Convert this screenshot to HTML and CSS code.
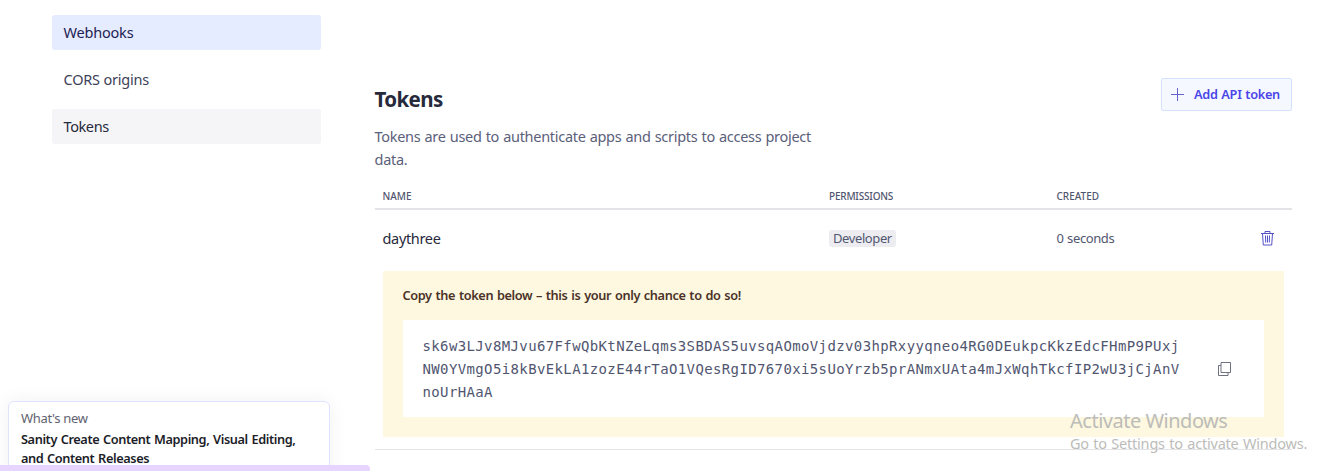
FILE: index.html
```html
<!DOCTYPE html>
<html lang="en">
<head>
<meta charset="utf-8">
<title>Tokens</title>
<link rel="stylesheet" href="styles.css">
</head>
<body>
<div class="page">
  <nav class="sidebar">
    <a class="nav-item nav-focus">Webhooks</a>
    <a class="nav-item">CORS origins</a>
    <a class="nav-item nav-current">Tokens</a>
  </nav>
  <main class="main">
    <header class="head">
      <div class="intro">
        <h1 class="title">Tokens</h1>
        <p class="desc">Tokens are used to authenticate apps and scripts to access project<br>data.</p>
      </div>
      <button class="add">
        <svg class="plus" width="15" height="15" viewBox="0 0 15 15"><path d="M7.500 1v13M1 7.500h13"/></svg>
        <span class="add-label">Add API token</span>
      </button>
    </header>
    <div class="row thead"><span>NAME</span><span class="th-perm">PERMISSIONS</span><span>CREATED</span></div>
    <div class="row trow">
      <span class="name">daythree</span>
      <span class="perm"><span class="badge">Developer</span></span>
      <span class="created">0 seconds</span>
      <svg class="trash" width="15" height="17" viewBox="0 0 15 17"><path d="M1 3.500h13M5 3.500V1.500h5v2M2.500 3.500l.8 11.500h8.400l.8-11.500M5.500 5.500l.2 7M7.500 5.500v7M9.500 5.500l-.2 7"/></svg>
    </div>
    <section class="notice">
      <p class="notice-title">Copy the token below – this is your only chance to do so!</p>
      <div class="secret">
        <code class="code">sk6w3LJv8MJvu67FfwQbKtNZeLqms3SBDAS5uvsqAOmoVjdzv03hpRxyyqneo4RG0DEukpcKkzEdcFHmP9PUxj<br>NW0YVmgO5i8kBvEkLA1zozE44rTaO1VQesRgID7670xi5sUoYrzb5prANmxUAta4mJxWqhTkcfIP2wU3jCjAnV<br>noUrHAaA</code>
        <svg class="copy" width="15" height="16" viewBox="0 0 15 16"><path d="M4 1.500h9.500v10H4zM4 4.500H1.500v10H11v-3"/></svg>
      </div>
    </section>
  </main>
</div>
<aside class="news">
  <p class="news-label">What's new</p>
  <p class="news-title">Sanity Create Content Mapping, Visual Editing,<br>and Content Releases</p>
</aside>
<div class="status"></div>
<div class="watermark">
  <p class="wm-title">Activate Windows</p>
  <p class="wm-text">Go to Settings to activate Windows.</p>
</div>
</body>
</html>
```
FILE: styles.css
```css
* { box-sizing: border-box; }
body { margin: 0; width: 1343px; height: 471px; overflow: hidden; position: relative; background: #fff; font-family: "Noto Sans", sans-serif; color: #272a3b; }
p, h1 { margin: 0; }
svg { fill: none; stroke: currentColor; flex: none; }
.page { display: flex; gap: 54px; padding-left: 52px; }
.sidebar { width: 269px; padding-top: 15px; display: flex; flex-direction: column; gap: 12px; }
.nav-item { height: 35px; padding-left: 11.5px; border-radius: 3px; font-size: 14.5px; line-height: 35px; letter-spacing: -.2px; color: #3e4259; }
.nav-focus { background: #e5ecff; color: #1e2253; }
.nav-current { background: #f5f5f7; color: #272a3b; letter-spacing: -.4px; }
.main { width: 917px; border-bottom: 1px solid #e3e4e8; height: 450px; }
.head { display: flex; justify-content: space-between; align-items: flex-start; padding-top: 78px; height: 184px; }
.intro { margin-left: -.5px; }
.title { font-size: 20.5px; line-height: 28px; font-weight: 700; letter-spacing: -.6px; margin-top: 7px; }
.desc { font-size: 14.5px; line-height: 23px; letter-spacing: -.29px; word-spacing: .6px; margin-top: 12px; color: #5b607a; white-space: nowrap; }
.add { width: 131px; height: 33px; padding: 0 0 1px 8px; display: flex; align-items: center; gap: 9px; border: 1px solid #d5e2ff; border-radius: 2px; background: #f5f8ff; color: #4a45e8; font: 600 12.75px/20px "Noto Sans", sans-serif; letter-spacing: -.32px; word-spacing: .8px; white-space: nowrap; }
.plus { stroke: #6863cf; }
.row { display: grid; grid-template-columns: 446.5px 227.5px 203.5px 15px; padding-left: 7.5px; align-items: center; }
.thead { height: 26px; border-bottom: 2px solid #e3e4e8; font-size: 10px; font-weight: 500; color: #515670; }
.th-perm { letter-spacing: -.2px; }
.trow { height: 61px; padding-bottom: 4px; }
.name { font-size: 14.5px; letter-spacing: -.33px; margin-top: -2px; }
.perm, .created { font-size: 13px; color: #515670; letter-spacing: -.4px; }
.created { margin-top: -1px; word-spacing: .6px; }
.badge { display: block; width: 67px; height: 17px; line-height: 17px; padding-left: 4px; border-radius: 3px; background: #ededf1; }
.trash { color: #5551c9; margin-left: -.5px; }
.notice { margin: 0 8px; height: 166px; padding: 14px 20px 20px; background: #fef8e0; }
.notice-title { margin-left: -.5px; font-size: 12.75px; line-height: 20px; font-weight: 600; letter-spacing: -.37px; word-spacing: .8px; color: #4a3228; }
.secret { margin-top: 15px; height: 97px; padding: 15px 32px 13px 19.5px; background: #fff; display: flex; justify-content: space-between; align-items: center; }
.code { font: 14px/23px "DejaVu Sans Mono", monospace; letter-spacing: .374px; white-space: nowrap; color: #515670; }
.copy { color: #6e7180; margin-bottom: 2px; }
.news { position: absolute; left: 8px; top: 401px; width: 322px; height: 90px; padding: 7px 12px; border: 1px solid #e0e2ff; border-radius: 6px; background: #fff; box-shadow: 0 0 20px rgba(0,0,0,.06); }
.news-label { font-size: 13px; line-height: 18px; letter-spacing: -.33px; color: #5f6270; }
.news-title { margin-top: 3px; font-size: 12.75px; line-height: 19px; font-weight: 600; letter-spacing: -.4px; word-spacing: .8px; color: #1b1d27; white-space: nowrap; }
.status { position: absolute; left: 0; bottom: 0; width: 370px; height: 6px; border-top-right-radius: 4px; background: #e8d5ff; }
.watermark { position: absolute; left: 1070px; top: 408px; color: #bcbcb9; white-space: nowrap; }
.wm-title { font-size: 20px; line-height: 26px; letter-spacing: -.49px; }
.wm-text { font-size: 14.5px; line-height: 20px; letter-spacing: -.2px; word-spacing: .8px; margin-top: -1px; }
```
